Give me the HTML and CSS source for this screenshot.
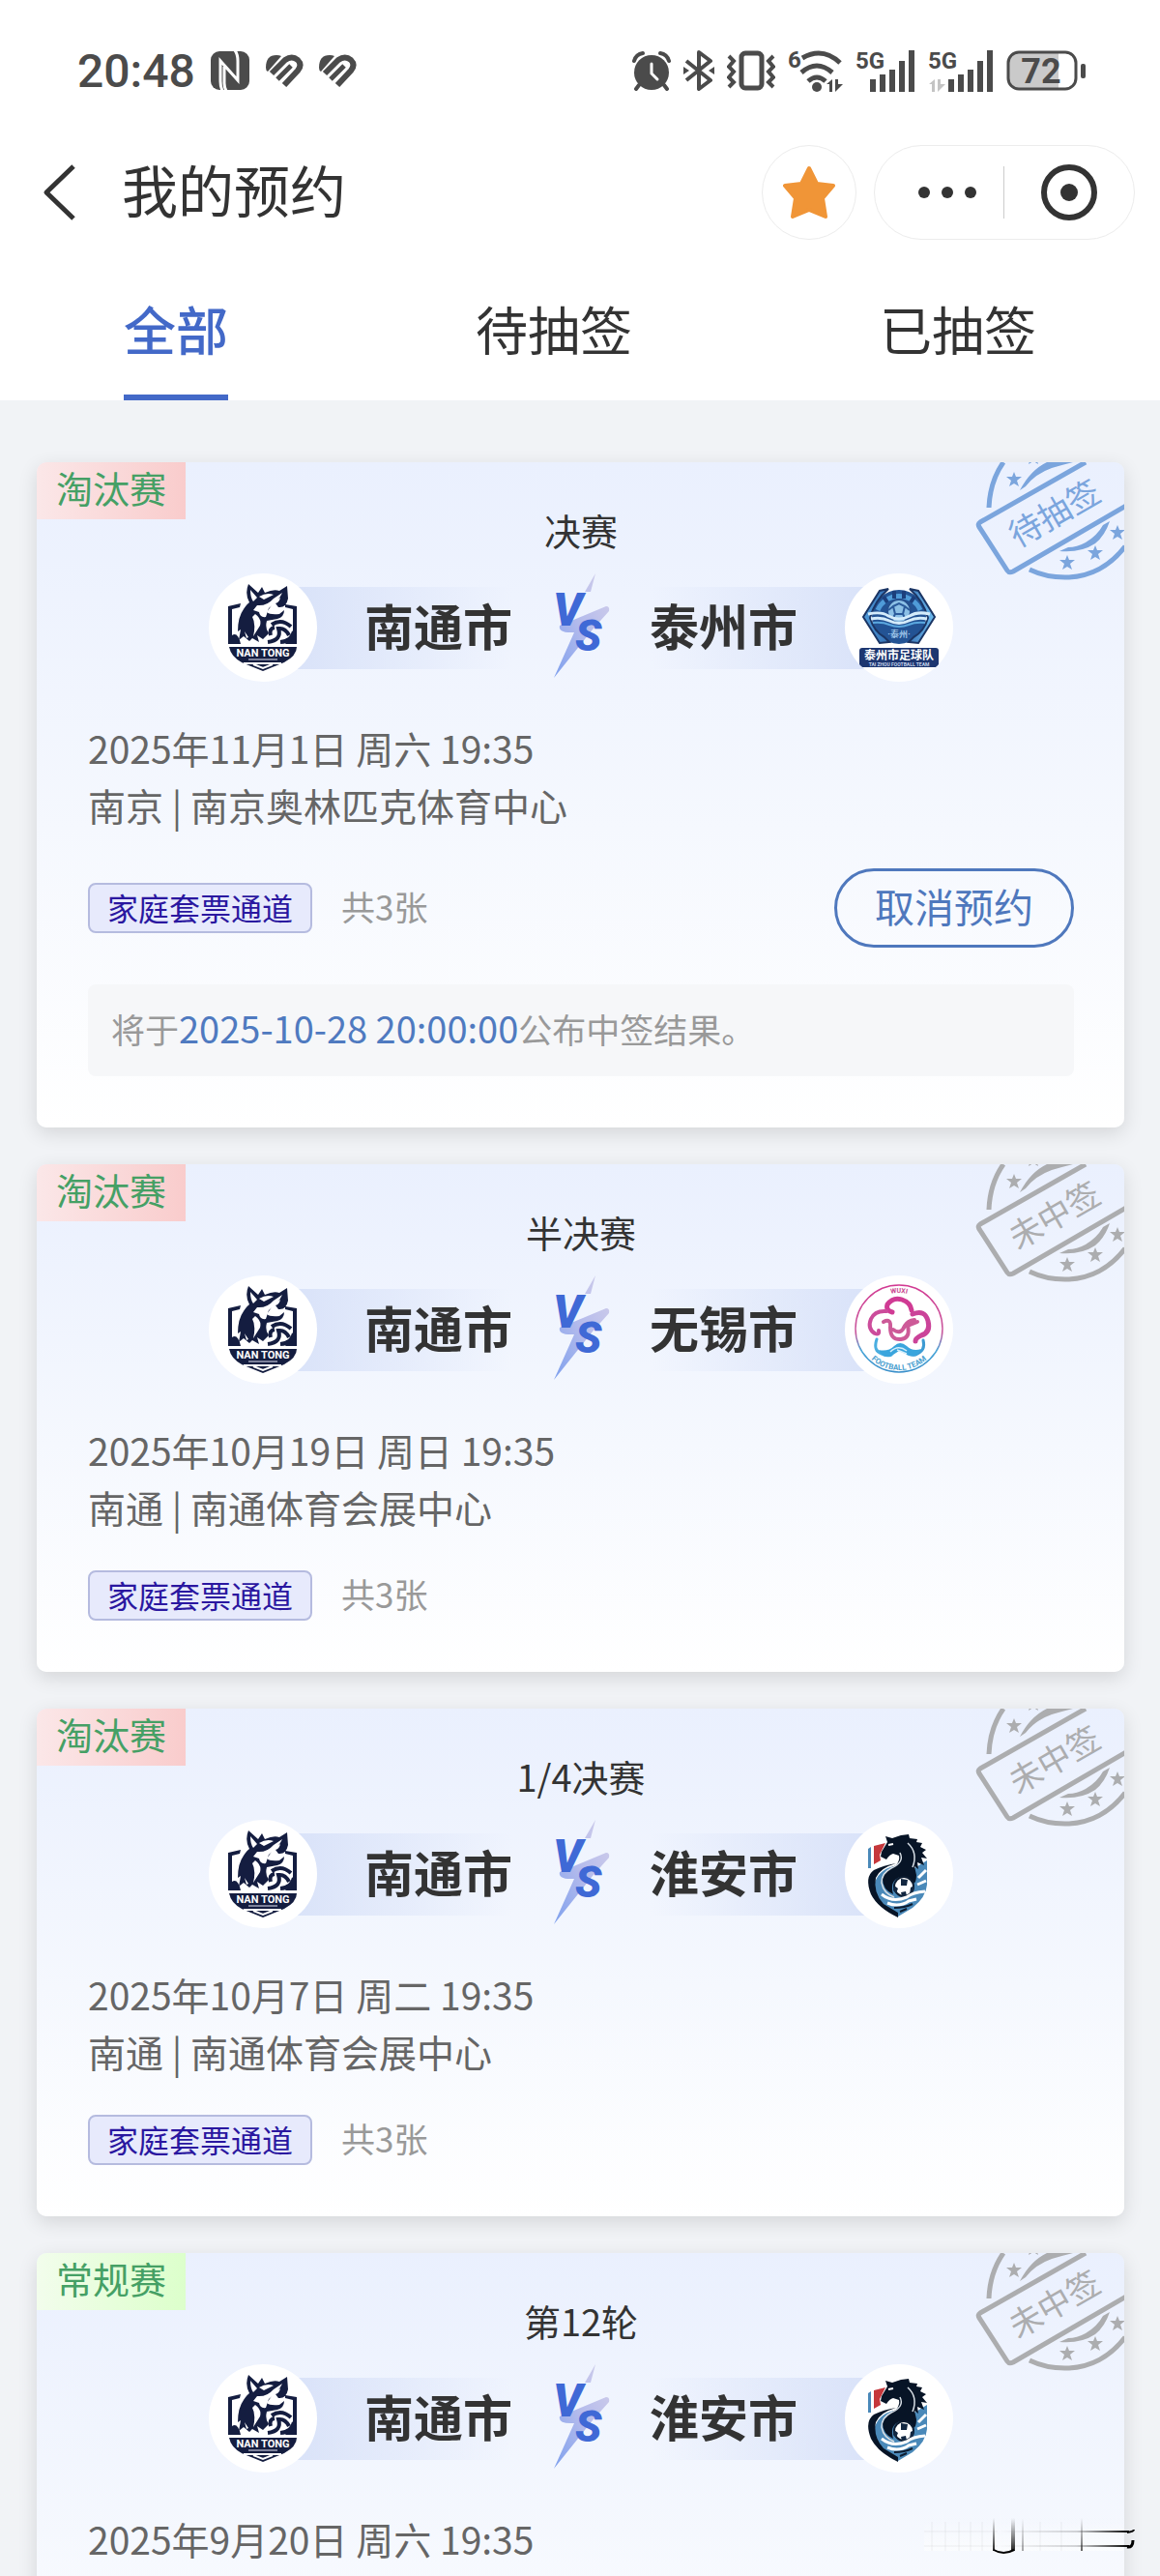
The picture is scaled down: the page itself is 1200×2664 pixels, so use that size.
FILE: index.html
```html
<!DOCTYPE html>
<html lang="zh-CN">
<head>
  <meta charset="UTF-8">
  <meta name="viewport" content="width=device-width, initial-scale=1.0">
  <title>我的预约</title>
  <link rel="stylesheet" href="styles.css">
</head>
<body>
  <!-- Shared gradients and paths -->
  <svg class="defs" width="0" height="0" aria-hidden="true">
    <defs>
      <linearGradient id="bolt" x1="1" y1="0" x2="0" y2="1">
        <stop offset="0" stop-color="#d3cfea"/>
        <stop offset="0.5" stop-color="#b4bbec"/>
        <stop offset="1" stop-color="#7ea0ee"/>
      </linearGradient>
      <linearGradient id="wuxi" x1="0" y1="0" x2="0" y2="1">
        <stop offset="0" stop-color="#d23a92"/>
        <stop offset="0.55" stop-color="#c95a9e"/>
        <stop offset="0.75" stop-color="#4aa6d8"/>
        <stop offset="1" stop-color="#3a8fca"/>
      </linearGradient>
      <linearGradient id="taizhou" x1="0" y1="0" x2="1" y2="0">
        <stop offset="0" stop-color="#4e9ad8"/>
        <stop offset="0.5" stop-color="#2b5fa6"/>
        <stop offset="1" stop-color="#6fbdf0"/>
      </linearGradient>
      <path id="star5" d="M0 -8 L2 -3 L8 -3 L3 1 L5 7 L0 4 L-5 7 L-3 1 L-8 -3 L-2 -3 Z"/>
      <path id="wuxi-top" d="M18 56 A38 38 0 0 1 94 56"/>
      <path id="wuxi-bottom" d="M14 56 A42 42 0 0 0 98 56"/>
    </defs>
  </svg>

  <!-- Logos and stamps -->
  <svg class="symbols" aria-hidden="true">
    <symbol id="vs" viewBox="0 0 100 120">
      <path fill="url(#bolt)" d="M65 4 L54 23 L60 23 Z M28 58 L76 38 Q80 38 79 43 L62 62 L22 112 L43 65 Q26 66 28 58 Z"/>
      <text class="vs-letter" x="21" y="58" font-size="48">V</text>
      <text class="vs-letter" x="44" y="84" font-size="45">S</text>
    </symbol>

    <symbol id="logo-nantong" viewBox="0 0 112 112">
      <path fill="#141d40" d="M20 34 L33 31 L32 35 L24 37 V64 Q30 60 33 73 H20 Z M79 32 L91 34 V73 H79 L84 66 L87 60 V37 L79 35 Z"/>
      <path fill="#141d40" d="M41 11 L51 20 L55 14 L58 20 Q67 16 73 18 L81 13 L82 26 Q80 36 72 35 L69 31 Q73 30 74 25 Q67 29 65 33 L60 40 Q63 43 73 42 L78 38 Q78 45 71 47 L60 49 Q58 57 62 62 L56 68 L50 64 L52 71 L45 67 L42 70 L36 65 L31 69 L33 58 L30 60 Q30 45 36 37 Q39 32 42 30 Q37 21 41 11 Z"/>
      <path fill="#fff" d="M43 17 L50 25 L46 29 Q43 25 43 17 Z M52 24 Q60 19 67 22 L57 27 Z M50 33 Q60 34 67 26 L76 20 Q72 29 62 36 L59 45 Q53 46 52 40 L46 38 Z M48 42 Q55 47 53 54 L46 65 Q49 52 45 45 Z M37 60 L41 66 L39 67 Z"/>
      <path fill="none" stroke="#141d40" stroke-width="4" d="M61 71 Q76 69 72 57 Q79 56 83 64 M65 53 Q75 46 85 55 M74 71 Q86 70 88 60 M64 64 Q62 57 68 56"/>
      <path fill="#141d40" d="M21 76 H91 Q91 85 78 92 L56 101 L34 92 Q23 86 21 76 Z"/>
      <path fill="none" stroke="#fff" stroke-width="2" d="M36 93 L75 93 M46 94 L56 98 L66 94"/>
      <path stroke="#7c819a" stroke-width="2" d="M41 89 H71"/>
      <text class="logo-text" x="56" y="86" font-size="11" fill="#fff" text-anchor="middle">NAN TONG</text>
    </symbol>

    <symbol id="logo-taizhou" viewBox="0 0 112 112">
      <circle cx="56" cy="45" r="28" fill="#235394"/>
      <path fill="none" stroke="#4f9bd8" stroke-width="5" d="M34 38 A24 24 0 0 1 78 38"/>
      <path fill="none" stroke="#1c3f7c" stroke-width="4" d="M51 18 V26 M61 18 V26 M40 24 L44 30 M72 24 L68 30"/>
      <path fill="url(#taizhou)" stroke="#1b3564" stroke-width="2" d="M45 16 L36 18 L19 45 L36 72 L46 71 L41 66 Q30 60 26 46 Q31 28 45 16 Z M67 16 L76 18 L93 45 L76 72 L66 71 L71 66 Q82 60 86 46 Q81 28 67 16 Z"/>
      <circle cx="56" cy="39" r="12" fill="#8cc0e6" stroke="#26508e" stroke-width="2"/>
      <path fill="none" stroke="#2b5b9b" stroke-width="2" d="M50 34 L56 31 L62 34 L60 42 H52 Z M45 38 L50 34 M67 38 L62 34 M52 42 L49 48 M60 42 L63 48"/>
      <path fill="none" stroke="#d4ecfb" stroke-width="3" d="M24 42 Q38 39 45 44 Q56 50 67 44 Q75 39 88 42 M27 47 Q38 45 46 49 Q56 54 66 49 Q74 45 85 47"/>
      <path fill="none" stroke="#5ba8df" stroke-width="2" d="M29 51 Q39 50 46 53 Q56 57 66 53 Q73 50 83 51"/>
      <text class="logo-text" x="56" y="66" font-size="9" fill="#9cc4e8" text-anchor="middle">·泰州·</text>
      <rect x="15" y="77" width="82" height="20" rx="3" fill="#1d3670"/>
      <text class="logo-text" x="56" y="89" font-size="12" fill="#fff" text-anchor="middle">泰州市足球队</text>
      <text class="logo-text" x="56" y="96" font-size="5" fill="#c5d2ea" text-anchor="middle">TAI ZHOU FOOTBALL TEAM</text>
    </symbol>

    <symbol id="logo-wuxi" viewBox="0 0 112 112">
      <circle cx="56" cy="55" r="45" fill="none" stroke="url(#wuxi)" stroke-width="1.5"/>
      <text class="logo-text" font-size="7" fill="#c9468f" text-anchor="middle"><textPath href="#wuxi-top" startOffset="50%">WUXI</textPath></text>
      <text class="logo-text" font-size="8" fill="#4aa0cf" text-anchor="middle"><textPath href="#wuxi-bottom" startOffset="50%">FOOTBALL TEAM</textPath></text>
      <g fill="none" stroke-linecap="round">
        <path stroke="#d03b94" stroke-width="5" d="M49 38 Q42 36 44 30 Q50 22 59 25 Q68 28 69 36"/>
        <path stroke="#cc4c9b" stroke-width="4" d="M43 37 Q31 36 27 45 Q23 55 31 60 Q36 62 35 57"/>
        <path stroke="#cb4399" stroke-width="5" d="M70 40 Q83 35 86 47 Q89 59 79 62 Q73 65 73 68"/>
        <path stroke="#4aaee0" stroke-width="3" d="M33 66 Q29 78 38 81 Q43 84 48 82"/>
        <path stroke="#3d9bd3" stroke-width="3" d="M81 67 Q84 78 73 82 Q69 83 65 81"/>
        <path stroke="#cd5a98" stroke-width="4" d="M40 48 Q48 44 47 54 Q47 67 58 66 Q68 65 65 52 L75 48 M50 56 Q58 62 62 52 Q65 47 72 46"/>
      </g>
      <path fill="#3aa5dd" d="M35 77 Q45 79 51 73 Q57 67 64 73 Q70 79 79 76 Q76 85 67 83 L56 78 L47 84 Q38 85 35 77 Z"/>
      <path fill="none" stroke="#d5eefb" stroke-width="1.5" d="M47 79 Q55 71 64 78 M54 77 L64 81"/>
    </symbol>

    <symbol id="logo-huaian" viewBox="0 0 112 112">
      <path fill="#4a89b9" d="M24 30 L27 28 V50 H24 Z M72 50 L85 42 V67 Q84 80 70 91 L55 100 L40 89 Q31 80 30 68 Q34 52 50 48 Z"/>
      <path fill="#c5373b" d="M30 27 L42 24 L36 36 L37 42 L30 46 Z"/>
      <path fill="#071426" d="M42 17 L49 19 L58 16 L66 15 L67 19 L75 20 L74 23 L80 24 L78 28 L84 31 L80 34 L85 40 L79 39 L82 47 L75 44 L76 51 L72 48 L74 57 Q74 66 70 66 Q66 58 57 59 Q46 63 50 77 Q39 72 39 61 Q42 51 53 47 Q57 42 56 37 L50 35 Q46 36 43 41 L37 38 L38 33 L44 23 Z"/>
      <path fill="#071426" d="M53 45 Q36 50 32 60 Q29 75 40 87 L55 96 V101 Q34 91 27 77 Q20 59 30 52 Q40 47 53 45 Z"/>
      <path fill="none" stroke="#d6dde4" stroke-width="1.5" d="M57 34 Q62 44 48 50 Q38 55 38 65 Q40 76 51 80 M65 24 Q76 34 70 49"/>
      <path stroke="#fff" stroke-width="2" d="M45 26 L50 25"/>
      <circle cx="61" cy="69" r="10" fill="#fff" stroke="#0d1c30" stroke-width="2"/>
      <path fill="#122741" d="M58 61 L65 62 L64 68 L58 68 Z M51 68 L55 71 L53 76 L50 73 Z M68 70 L72 68 L71 74 L67 77 Z M58 75 L63 74 L64 79 L59 79 Z"/>
      <path fill="none" stroke="#fff" stroke-width="3" d="M38 77 Q49 86 64 80 Q70 75 83 74 M44 86 Q56 91 66 84 L74 82 M76 60 L84 52 M75 67 L84 63"/>
      <path fill="none" stroke="#0d1c30" stroke-width="2" d="M51 91 Q62 91 70 87 M57 95 L64 92"/>
    </symbol>

    <symbol id="stamp" viewBox="0 0 154 122">
      <g fill="none" stroke="currentColor" stroke-width="5">
        <path d="M29 0 Q15 20 14 47"/>
        <path d="M56 111 Q75 120 97 119 Q132 117 155 87"/>
        <path stroke-linejoin="round" d="M114 0 L5 62 Q2 64 4 67 L33 112 Q35 115 39 113 L156 45"/>
      </g>
      <g fill="currentColor">
        <path d="M46 29 Q57 8 74 0 H101 Q89 3 79 6 Q62 12 52 25 Z"/>
        <path d="M87 92 Q109 94 124 84 Q134 76 139 61 L132 65 Q126 76 114 83 Q105 88 96 88 Z"/>
        <use href="#star5" x="40" y="18"/>
        <use href="#star5" x="60" y="-5"/>
        <use href="#star5" x="95" y="104"/>
        <use href="#star5" x="124" y="94"/>
        <use href="#star5" x="147" y="73"/>
      </g>
    </symbol>
  </svg>

  <div class="app">
    <header class="header">
      <div class="status-bar">
        <div class="status-left">
          <span class="clock">20:48</span>
          <svg width="42" height="42" viewBox="0 0 42 42">
            <rect x="1" y="1" width="40" height="40" rx="9" fill="#4b4b4b"/>
            <path fill="none" stroke="#fff" stroke-width="3" d="M13 42 Q11 38 11 32 V11 L29 31 V11 Q29 4 26 0 M15 17 V34 Q15 38 17 42"/>
          </svg>
          <svg width="40" height="34" viewBox="0 0 40 34">
            <path fill="#4b4b4b" d="M1 14 Q1 1 12 1 Q15 1 17 2 L3 18 Q1 17 1 14 Z"/>
            <path fill="none" stroke="#4b4b4b" stroke-width="6" d="M7 20 L21 6 Q28 1 34 6 Q39 11 34 17 L20 32"/>
            <path fill="none" stroke="#4b4b4b" stroke-width="5" d="M13 26 L27 12"/>
          </svg>
          <svg width="40" height="34" viewBox="0 0 40 34">
            <path fill="#4b4b4b" d="M1 14 Q1 1 12 1 Q15 1 17 2 L3 18 Q1 17 1 14 Z"/>
            <path fill="none" stroke="#4b4b4b" stroke-width="6" d="M7 20 L21 6 Q28 1 34 6 Q39 11 34 17 L20 32"/>
            <path fill="none" stroke="#4b4b4b" stroke-width="5" d="M13 26 L27 12"/>
          </svg>
        </div>
        <div class="status-right">
          <svg width="40" height="42" viewBox="0 0 40 42">
            <circle cx="20" cy="23" r="18" fill="#4b4b4b"/>
            <path fill="none" stroke="#4b4b4b" stroke-width="4" stroke-linecap="round" d="M2 11 Q4 4 11 3 M38 11 Q36 4 29 3 M7 36 L4 40 M33 36 L36 40"/>
            <path fill="none" stroke="#fff" stroke-width="3" stroke-linecap="round" d="M20 14 V24 L26 30"/>
          </svg>
          <svg width="32" height="42" viewBox="0 0 32 42">
            <path fill="none" stroke="#4b4b4b" stroke-width="4" stroke-linejoin="round" d="M3 11 L28 31 L16 40 V2 L28 11 L3 31"/>
            <path fill="#4b4b4b" d="M0 17 L6 21 L0 25 Z M32 17 L26 21 L32 25 Z"/>
          </svg>
          <svg width="50" height="42" viewBox="0 0 50 42">
            <rect x="15" y="3" width="21" height="36" rx="4" fill="none" stroke="#4b4b4b" stroke-width="5"/>
            <path fill="none" stroke="#4b4b4b" stroke-width="4" d="M2 6 L7 11 L2 17 L7 22 L2 28 L7 33 L2 38 M48 6 L43 11 L48 17 L43 22 L48 28 L43 33 L48 38"/>
          </svg>
          <svg width="57" height="44" viewBox="0 0 57 44">
            <text class="status-text" x="0" y="19" font-size="24">6</text>
            <g fill="none" stroke="#4b4b4b" stroke-width="5">
              <path d="M15 9 Q36 -3 54 14"/>
              <path d="M14 24 Q30 10 46 24"/>
              <path d="M21 33 Q30 25 39 33"/>
            </g>
            <circle cx="30" cy="39" r="5" fill="#4b4b4b"/>
            <path fill="#4b4b4b" d="M40 36 L46 31 V44 H43 V36 Z M49 31 H52 V36 H57 L49 44 Z"/>
          </svg>
          <svg width="62" height="44" viewBox="0 0 62 44">
            <text class="status-text" x="0" y="20" font-size="24">5G</text>
            <path fill="none" stroke="#4b4b4b" stroke-width="6" d="M18 31 V44 M28 26 V44 M38 21 V44 M48 12 V44 M58 1 V44"/>
          </svg>
          <svg width="68" height="44" viewBox="0 0 68 44">
            <text class="status-text" x="0" y="20" font-size="24">5G</text>
            <path fill="#c4c4c4" d="M1 36 L7 31 V44 H4 V36 Z M10 31 H13 V36 H18 L10 44 Z"/>
            <path fill="none" stroke="#4b4b4b" stroke-width="6" d="M24 31 V44 M34 26 V44 M44 21 V44 M54 12 V44 M64 1 V44"/>
          </svg>
          <svg width="82" height="42" viewBox="0 0 82 42">
            <path fill="#cacaca" d="M11 3 H54 V39 H11 Q3 39 3 31 V11 Q3 3 11 3 Z"/>
            <rect x="2" y="2" width="70" height="38" rx="11" fill="none" stroke="#4b4b4b" stroke-width="3"/>
            <rect x="77" y="14" width="5" height="15" rx="2" fill="#4b4b4b"/>
            <text class="status-text" x="36" y="34" font-size="36" text-anchor="middle">72</text>
          </svg>
        </div>
      </div>

      <div class="nav">
        <button class="back" type="button" aria-label="返回">
          <svg width="34" height="58" viewBox="0 0 34 58"><path fill="none" stroke="#333" stroke-width="5" stroke-linejoin="round" d="M32 2 L4 29 L32 56"/></svg>
        </button>
        <h1 class="title">我的预约</h1>
        <button class="favorite" type="button" aria-label="收藏">
          <svg width="54" height="56" viewBox="0 0 54 56"><path fill="#f09537" stroke="#f09537" stroke-width="4" stroke-linejoin="round" d="M27 3 L35 19 L52 21 L41 34 L44 53 L27 46 L10 53 L13 34 L2 21 L19 19 Z"/></svg>
        </button>
        <div class="capsule">
          <button class="capsule-btn more" type="button" aria-label="更多">
            <svg width="62" height="14" viewBox="0 0 62 14" fill="#333"><circle cx="7" cy="7" r="6"/><circle cx="31" cy="7" r="6"/><circle cx="55" cy="7" r="6"/></svg>
          </button>
          <button class="capsule-btn" type="button" aria-label="关闭">
            <svg width="58" height="58" viewBox="0 0 58 58"><circle cx="29" cy="29" r="26" fill="none" stroke="#333" stroke-width="6"/><circle cx="29" cy="29" r="9" fill="#333"/></svg>
          </button>
        </div>
      </div>

      <nav class="tabs">
        <a class="tab active" href="#">全部</a>
        <a class="tab" href="#">待抽签</a>
        <a class="tab" href="#">已抽签</a>
      </nav>
    </header>

    <main class="list">
      <article class="card">
        <span class="stage knockout">淘汰赛</span>
        <svg class="stamp pending" width="154" height="122">
          <use href="#stamp"/>
          <text class="stamp-text" x="82" y="65" transform="rotate(-30 82 53)">待抽签</text>
        </svg>
        <h2 class="round">决赛</h2>
        <div class="teams">
          <div class="team home">
            <svg class="logo"><use href="#logo-nantong"/></svg>
            <span class="team-name">南通市</span>
          </div>
          <svg class="vs"><use href="#vs"/></svg>
          <div class="team away">
            <span class="team-name">泰州市</span>
            <svg class="logo"><use href="#logo-taizhou"/></svg>
          </div>
        </div>
        <div class="info">
          <p>2025年11月1日 周六 19:35</p>
          <p>南京 | 南京奥林匹克体育中心</p>
        </div>
        <div class="ticket">
          <span class="channel">家庭套票通道</span>
          <span class="count">共3张</span>
          <button class="cancel" type="button">取消预约</button>
        </div>
        <p class="notice">将于<time>2025-10-28 20:00:00</time>公布中签结果。</p>
      </article>

      <article class="card">
        <span class="stage knockout">淘汰赛</span>
        <svg class="stamp missed" width="154" height="122">
          <use href="#stamp"/>
          <text class="stamp-text" x="82" y="65" transform="rotate(-30 82 53)">未中签</text>
        </svg>
        <h2 class="round">半决赛</h2>
        <div class="teams">
          <div class="team home">
            <svg class="logo"><use href="#logo-nantong"/></svg>
            <span class="team-name">南通市</span>
          </div>
          <svg class="vs"><use href="#vs"/></svg>
          <div class="team away">
            <span class="team-name">无锡市</span>
            <svg class="logo"><use href="#logo-wuxi"/></svg>
          </div>
        </div>
        <div class="info">
          <p>2025年10月19日 周日 19:35</p>
          <p>南通 | 南通体育会展中心</p>
        </div>
        <div class="ticket">
          <span class="channel">家庭套票通道</span>
          <span class="count">共3张</span>
        </div>
      </article>

      <article class="card">
        <span class="stage knockout">淘汰赛</span>
        <svg class="stamp missed" width="154" height="122">
          <use href="#stamp"/>
          <text class="stamp-text" x="82" y="65" transform="rotate(-30 82 53)">未中签</text>
        </svg>
        <h2 class="round">1/4决赛</h2>
        <div class="teams">
          <div class="team home">
            <svg class="logo"><use href="#logo-nantong"/></svg>
            <span class="team-name">南通市</span>
          </div>
          <svg class="vs"><use href="#vs"/></svg>
          <div class="team away">
            <span class="team-name">淮安市</span>
            <svg class="logo"><use href="#logo-huaian"/></svg>
          </div>
        </div>
        <div class="info">
          <p>2025年10月7日 周二 19:35</p>
          <p>南通 | 南通体育会展中心</p>
        </div>
        <div class="ticket">
          <span class="channel">家庭套票通道</span>
          <span class="count">共3张</span>
        </div>
      </article>

      <article class="card">
        <span class="stage regular">常规赛</span>
        <svg class="stamp missed" width="154" height="122">
          <use href="#stamp"/>
          <text class="stamp-text" x="82" y="65" transform="rotate(-30 82 53)">未中签</text>
        </svg>
        <h2 class="round">第12轮</h2>
        <div class="teams">
          <div class="team home">
            <svg class="logo"><use href="#logo-nantong"/></svg>
            <span class="team-name">南通市</span>
          </div>
          <svg class="vs"><use href="#vs"/></svg>
          <div class="team away">
            <span class="team-name">淮安市</span>
            <svg class="logo"><use href="#logo-huaian"/></svg>
          </div>
        </div>
        <div class="info">
          <p>2025年9月20日 周六 19:35</p>
        </div>
      </article>
    </main>

    <!-- Faint line mark in the bottom corner -->
    <svg class="corner-mark" width="224" height="40" viewBox="0 0 224 40" aria-hidden="true">
      <defs>
        <linearGradient id="fade-h" x1="0" x2="1" y1="0" y2="0"><stop offset="0" stop-color="#333" stop-opacity="0"/><stop offset="0.6" stop-color="#333" stop-opacity="0.2"/><stop offset="1" stop-color="#000"/></linearGradient>
        <linearGradient id="fade-v" x1="0" x2="0" y1="0" y2="1"><stop offset="0" stop-color="#333" stop-opacity="0"/><stop offset="1" stop-color="#222"/></linearGradient>
        <linearGradient id="haze" x1="0" x2="0" y1="0" y2="1"><stop offset="0" stop-color="#fff" stop-opacity="0"/><stop offset="1" stop-color="#fff" stop-opacity="0.5"/></linearGradient>
      </defs>
      <rect x="4" y="0" width="206" height="34" fill="url(#haze)"/>
      <path stroke="#333" stroke-opacity="0.07" d="M12 4 V34 M26 4 V34 M40 4 V34 M52 4 V34 M64 4 V34 M124 4 V34 M146 4 V34 M4 14 H80 M4 29 H80"/>
      <rect x="80" y="13" width="136" height="2" fill="url(#fade-h)"/>
      <rect x="80" y="28" width="136" height="2" fill="url(#fade-h)"/>
      <rect x="75" y="0" width="2" height="34" fill="url(#fade-v)"/>
      <rect x="94" y="0" width="4" height="34" fill="url(#fade-v)"/>
      <rect x="105" y="0" width="2" height="34" fill="url(#fade-v)" opacity="0.4"/>
      <rect x="166" y="0" width="2" height="34" fill="url(#fade-v)" opacity="0.7"/>
      <path fill="none" stroke="#000" stroke-width="2" d="M76 33 Q86 39 97 33 M214 15 Q221 14 221 12"/>
      <path fill="none" stroke="#000" stroke-width="3" d="M214 30 Q220 31 220 23"/>
    </svg>
  </div>
</body>
</html>
```

FILE: styles.css
```css
* {
  box-sizing: border-box;
}

body {
  margin: 0;
  font-family: "Noto Sans CJK SC", "Noto Sans", sans-serif;
  color: #333;
  background: #f1f3f6;
}

h1,
h2,
p {
  margin: 0;
  font-weight: 400;
}

button {
  margin: 0;
  padding: 0;
  border: none;
  background: none;
  font-family: inherit;
  cursor: pointer;
}

svg {
  display: block;
  flex-shrink: 0;
}

.defs {
  position: absolute;
}

.symbols {
  display: none;
}

.app {
  display: flex;
  flex-direction: column;
  height: 100vh;
}

/* Header */
.header {
  flex-shrink: 0;
  background: #fff;
}

.status-bar {
  display: flex;
  align-items: center;
  justify-content: space-between;
  height: 146px;
  padding: 0 77px 0 80px;
}

.status-left {
  display: flex;
  align-items: center;
  gap: 15px;
}

.status-right {
  display: flex;
  align-items: center;
  gap: 13px;
}

.clock {
  font-family: Roboto, sans-serif;
  font-size: 48px;
  font-weight: 500;
  color: #4b4b4b;
}

.status-text {
  font-family: Roboto, sans-serif;
  font-weight: 700;
  fill: #4b4b4b;
}

.nav {
  display: flex;
  align-items: center;
  height: 106px;
  padding: 0 26px 0 44px;
}

.title {
  flex: 1;
  margin-left: 48px;
  padding-bottom: 8px;
  font-size: 58px;
  line-height: 80px;
}

.favorite {
  display: flex;
  align-items: center;
  justify-content: center;
  width: 98px;
  height: 98px;
  border: 1px solid #ececec;
  border-radius: 50%;
}

.capsule {
  display: flex;
  align-items: center;
  width: 270px;
  height: 98px;
  margin-left: 18px;
  border: 1px solid #ececec;
  border-radius: 49px;
}

.capsule-btn {
  display: flex;
  flex: 1;
  align-items: center;
  justify-content: center;
  height: 54px;
}

.more {
  flex: 0 0 50%;
  padding-left: 16px;
  border-right: 1px solid #ccc;
}

.tabs {
  display: flex;
  justify-content: space-around;
}

.tab {
  padding: 56px 0 36px;
  border-bottom: 6px solid transparent;
  font-size: 54px;
  line-height: 64px;
  color: #333;
  text-decoration: none;
}

.tab.active {
  font-weight: 500;
  color: #4369c8;
  border-bottom-color: #4369c8;
}

/* Card list */
.list {
  display: flex;
  flex: 1;
  flex-direction: column;
  gap: 38px;
  min-height: 0;
  padding: 64px 37px 38px 38px;
  overflow-y: auto;
  scrollbar-width: none;
}

.card {
  position: relative;
  flex-shrink: 0;
  min-height: 525px;
  padding: 43px 52px 53px 53px;
  border-radius: 10px;
  background: linear-gradient(#eaf0fe, #f5f8fe 55%, #fff);
  box-shadow: 0 6px 20px rgba(0, 0, 0, 0.12);
}

.stage {
  position: absolute;
  top: 0;
  left: 0;
  padding: 0 20px 8px;
  border-top-left-radius: 10px;
  font-size: 38px;
  line-height: 51px;
  color: #45a065;
}

.knockout {
  background: linear-gradient(90deg, #fbe7e8, #f9cccc);
}

.regular {
  background: linear-gradient(90deg, #f2fdec, #dcffcb);
}

.stamp {
  position: absolute;
  top: 0;
  right: 0;
  border-top-right-radius: 10px;
}

.pending {
  color: #7ba5dd;
}

.missed {
  color: #acadaf;
}

.stamp-text {
  font-size: 34px;
  font-weight: 400;
  fill: currentColor;
  text-anchor: middle;
}

.round {
  font-size: 38px;
  line-height: 54px;
  text-align: center;
}

/* Teams */
.teams {
  display: flex;
  align-items: center;
  justify-content: center;
  margin-top: 18px;
}

.team {
  display: flex;
  align-items: center;
  gap: 49px;
  background-repeat: no-repeat;
  background-size: 258px 85px;
}

.home {
  background-image: linear-gradient(90deg, #d6e0f8, rgba(230, 237, 253, 0));
  background-position: 56px center;
}

.away {
  background-image: linear-gradient(270deg, #d6e0f8, rgba(230, 237, 253, 0));
  background-position: 0 center;
}

.logo {
  width: 112px;
  height: 112px;
  border-radius: 50%;
  background: #fff;
}

.logo-text {
  font-family: Roboto, "Noto Sans CJK SC", sans-serif;
  font-weight: 700;
}

.team-name {
  padding-bottom: 6px;
  font-size: 51px;
  font-weight: 700;
  line-height: 72px;
}

.vs {
  width: 100px;
  height: 120px;
  margin: -4px 21px;
}

.vs-letter {
  font-family: Roboto, sans-serif;
  font-style: italic;
  font-weight: 900;
  fill: #3f69d6;
}

/* Match info */
.info {
  margin-top: 39px;
  font-size: 39px;
  line-height: 59px;
  color: #666;
}

.ticket {
  display: flex;
  align-items: center;
  margin-top: 36px;
}

.channel {
  padding: 0 18px 2px;
  border: 2px solid #b5bbdf;
  border-radius: 8px;
  background: #e7eafc;
  font-size: 32px;
  line-height: 46px;
  color: #2a17a0;
}

.count {
  margin-left: 30px;
  padding-bottom: 4px;
  font-size: 35px;
  line-height: 48px;
  color: #999;
}

.cancel {
  height: 82px;
  margin-left: auto;
  padding: 0 39px 6px;
  border: 3px solid #4f78bd;
  border-radius: 41px;
  font-size: 41px;
  line-height: 70px;
  color: #4f78bd;
}

.notice {
  margin-top: 38px;
  padding: 0 24px 4px;
  border-radius: 8px;
  background: #f6f7f9;
  font-size: 35px;
  line-height: 91px;
  color: #999;
}

.notice time {
  font-size: 38px;
  line-height: 1;
  color: #4f7ac0;
}

.corner-mark {
  position: fixed;
  right: 24px;
  bottom: 20px;
}
```
